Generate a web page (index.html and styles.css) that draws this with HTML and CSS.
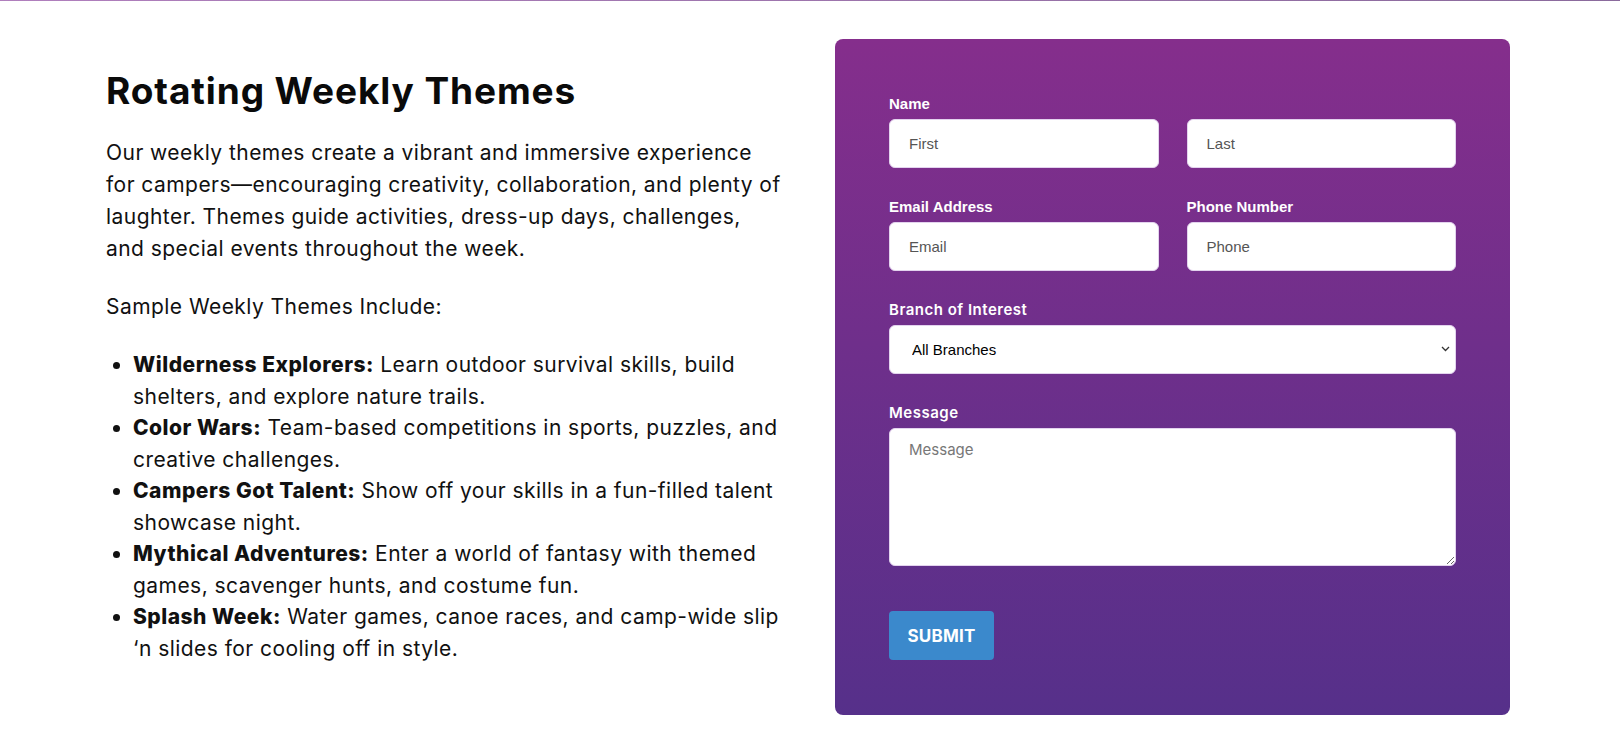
FILE: index.html
```html
<!DOCTYPE html>
<html lang="en">
<head>
<meta charset="utf-8">
<title>Rotating Weekly Themes</title>
<link rel="stylesheet" href="styles.css">
</head>
<body>
<div class="topline"></div>
<main class="page">
  <section class="intro">
    <h1 class="title">Rotating Weekly Themes</h1>
    <p class="text">Our weekly themes create a vibrant and immersive experience for campers—encouraging creativity, collaboration, and plenty of laughter. Themes guide activities, dress-up days, challenges, and special events throughout the week.</p>
    <p class="text">Sample Weekly Themes Include:</p>
    <ul class="themes">
      <li><strong>Wilderness Explorers:</strong> Learn outdoor survival skills, build shelters, and explore nature trails.</li>
      <li><strong>Color Wars:</strong> Team-based competitions in sports, puzzles, and creative challenges.</li>
      <li><strong>Campers Got Talent:</strong> Show off your skills in a fun-filled talent showcase night.</li>
      <li><strong>Mythical Adventures:</strong> Enter a world of fantasy with themed games, scavenger hunts, and costume fun.</li>
      <li><strong>Splash Week:</strong> Water games, canoe races, and camp-wide slip ‘n slides for cooling off in style.</li>
    </ul>
  </section>
  <form class="card">
    <div class="field">
      <label class="label">Name</label>
      <div class="pair">
        <input class="input" type="text" placeholder="First">
        <input class="input" type="text" placeholder="Last">
      </div>
    </div>
    <div class="pair">
      <div class="field">
        <label class="label">Email Address</label>
        <input class="input" type="email" placeholder="Email">
      </div>
      <div class="field">
        <label class="label">Phone Number</label>
        <input class="input" type="tel" placeholder="Phone">
      </div>
    </div>
    <div class="field">
      <label class="label label-alt">Branch of Interest</label>
      <div class="select-wrap">
        <select class="select">
          <option>All Branches</option>
        </select>
        <svg class="chevron" width="9" height="6" viewBox="0 0 9 6"><path d="M1 1l3.5 3.5L8 1" fill="none" stroke="#333" stroke-width="1.3"/></svg>
      </div>
    </div>
    <div class="field field-last">
      <label class="label label-alt">Message</label>
      <textarea class="textarea" placeholder="Message"></textarea>
    </div>
    <button class="submit" type="button">SUBMIT</button>
  </form>
</main>
</body>
</html>
```
FILE: styles.css
```css
* { box-sizing: border-box; }
html, body { margin: 0; padding: 0; background: #fff; }
body { font-family: "Inter", "Roboto", sans-serif; color: #111; }

.topline {
  height: 1px;
  background: linear-gradient(90deg, #b07fbd, #8a6a9c);
}

.page {
  width: 1408px;
  margin: 0 auto;
  padding: 38px 4px 0 0;
  display: flex;
  gap: 50px;
  align-items: flex-start;
}

.intro {
  width: 679px;
  flex: none;
  padding-top: 30px;
}

.title {
  margin: 0 0 24px;
  font-family: "Inter", sans-serif;
  font-weight: 700;
  font-size: 37px;
  line-height: 44px;
  letter-spacing: 0.9px;
  color: #0a0a0a;
}

.text {
  margin: 0 0 26px;
  font-size: 21px;
  line-height: 32px;
  letter-spacing: 0.45px;
}

.themes {
  margin: 0;
  padding-left: 27px;
  font-size: 21px;
  line-height: 31.5px;
  letter-spacing: 0.45px;
}

.themes strong { font-weight: 800; letter-spacing: 0.5px; }

.card {
  width: 675px;
  flex: none;
  padding: 56px 54px 55px 54px;
  border-radius: 8px;
  background: linear-gradient(180deg, #852e8c 0%, #6f2f8b 45%, #56308a 100%);
  display: flex;
  flex-direction: column;
}

.field { display: flex; flex-direction: column; margin-bottom: 30px; }
.field-last { margin-bottom: 45px; }

.pair {
  display: grid;
  grid-template-columns: 1fr 1fr;
  column-gap: 28px;
}

.pair > .field { margin-bottom: 30px; }

.label {
  font-family: "Liberation Sans", Arial, sans-serif;
  font-weight: 700;
  font-size: 15px;
  line-height: 18px;
  color: #fff;
  margin-bottom: 6px;
}

.label-alt {
  font-family: "Inter", sans-serif;
  font-weight: 600;
  font-size: 15px;
  letter-spacing: 0.5px;
}

.input, .select, .textarea {
  width: 100%;
  height: 49px;
  border: 1px solid #e3d3ee;
  border-radius: 6px;
  background: #fff;
  font-family: "Liberation Sans", Arial, sans-serif;
  font-size: 15px;
  color: #222;
  padding: 0 19px;
  outline: none;
}

.input::placeholder { color: #555; }

.select-wrap { position: relative; }

.select {
  appearance: none;
  -webkit-appearance: none;
  padding-left: 22px;
  color: #000;
}

.chevron {
  position: absolute;
  right: 6px;
  top: 21px;
}

.textarea {
  height: 138px;
  padding: 11px 19px;
  resize: vertical;
  font-family: "Inter", sans-serif;
  font-size: 15px;
}

.textarea::placeholder { color: #777; }

.submit {
  align-self: flex-start;
  width: 105px;
  height: 49px;
  border: none;
  border-radius: 4px;
  background: #3b89cc;
  color: #fff;
  font-family: "Inter", sans-serif;
  font-weight: 700;
  font-size: 17px;
  letter-spacing: 0.2px;
  padding: 0;
}
```
